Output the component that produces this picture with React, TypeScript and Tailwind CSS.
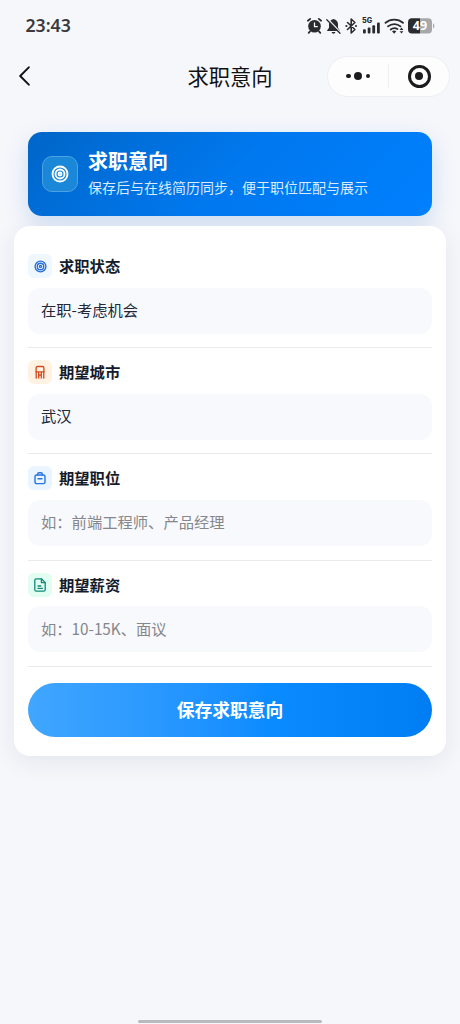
import React, { useState } from 'react';

type IconProps = { className?: string };

const TargetIcon = ({ className }: IconProps) => (
  <svg className={className} viewBox="0 0 24 24" fill="none" stroke="currentColor" strokeWidth={2.5}>
    <circle cx="12" cy="12" r="10" />
    <circle cx="12" cy="12" r="6" />
    <circle cx="12" cy="12" r="2" />
  </svg>
);

const CityIcon = ({ className }: IconProps) => (
  <svg className={className} viewBox="0 0 12 14" fill="none" stroke="currentColor" strokeWidth={1.3} strokeLinejoin="round">
    <path d="M2.1 7.500V3C2.100 2 2.700 1.500 3.600 1.500h4.800c.9 0 1.500.5 1.500 1.500v4.500" />
    <path d="M1.600 6.900h8.800M2.200 13.400V7M9.800 13.400V7M4.700 13.400V7M7.300 13.400V7M4.700 10h2.600M1.600 12.900h1.500M8.900 12.900h1.500" />
  </svg>
);

const BagIcon = ({ className }: IconProps) => (
  <svg className={className} viewBox="0 0 12 14" fill="none" stroke="currentColor" strokeWidth={1.4} strokeLinejoin="round" strokeLinecap="round">
    <rect x="1" y="4" width="10" height="8.6" rx="1.6" />
    <path d="M3.600 4v-.8c0-.9.6-1.500 1.400-1.500h2c.8 0 1.400.6 1.400 1.500V4M4 7.700h4" />
  </svg>
);

const DocIcon = ({ className }: IconProps) => (
  <svg className={className} viewBox="0 0 12 14" fill="none" stroke="currentColor" strokeWidth={1.3} strokeLinejoin="round" strokeLinecap="round">
    <path d="M7.400.8H2.300C1.500.8.8 1.500.8 2.300v9.400c0 .8.7 1.500 1.500 1.500h7.400c.8 0 1.500-.7 1.500-1.500V4.600z" />
    <path d="M7.400.8v3.800h3.800M4 8h2.800M4 10.400h4.400" />
  </svg>
);

const StatusIcons = () => (
  <svg className="h-5 w-[130px]" viewBox="0 0 130 20" fill="none">
    {/* alarm */}
    <g stroke="#2b2b2d" strokeWidth="1.8" strokeLinecap="round">
      <circle cx="8.500" cy="10.200" r="6.300" fill="#2b2b2d" stroke="none" />
      <path d="M1.900 4.800l2.300-1.900M15.100 4.800l-2.300-1.900M4 15.400l-1.300 1.400M13 15.400l1.300 1.400" />
      <path d="M8.500 7v3.600h2.800" stroke="#f6f7fb" strokeWidth="1.300" />
    </g>
    {/* muted bell */}
    <path d="M27.500 3c-3 .6-4.500 2.700-4.500 5.300v3.400l-1.900 2.700v.7h12.800v-.7L32 11.700V8.300C32 5.700 30.500 3.600 27.500 3z" fill="#2b2b2d" />
    <path d="M25.600 16h3.800c-.3 1.200-1 1.700-1.900 1.700s-1.600-.5-1.900-1.700z" fill="#2b2b2d" />
    <path d="M21.800 3l13.200 14" stroke="#f6f7fb" strokeWidth="1.500" />
    <path d="M20.800 3.700L34 17.300" stroke="#2b2b2d" strokeWidth="1.300" strokeLinecap="round" />
    {/* bluetooth */}
    <path d="M41.500 6.500l7.400 7-3.700 3.500V3l3.700 3.500-7.400 7" stroke="#2b2b2d" strokeWidth="1.600" strokeLinejoin="round" strokeLinecap="round" />
    <circle cx="40.400" cy="10" r="1.100" fill="#2b2b2d" />
    <circle cx="50" cy="10" r="1.100" fill="#2b2b2d" />
    {/* mobile signal */}
    <text x="56" y="7.200" fontSize="7.200" fontWeight="800" fill="#2b2b2d" className="font-['Inter',sans-serif]">5G</text>
    <g fill="#2b2b2d">
      <rect x="57" y="13.200" width="2.800" height="4.300" rx="1" />
      <rect x="61.700" y="11.500" width="2.800" height="6" rx="1" />
      <rect x="66.300" y="9.300" width="2.800" height="8.200" rx="1" />
      <rect x="71" y="6.500" width="2.800" height="11" rx="1" />
    </g>
    {/* wifi */}
    <g stroke="#2b2b2d" strokeWidth="1.800" strokeLinecap="round">
      <path d="M79.500 6.800c5-4.300 12.500-4.300 17.500 0M82 10.400c3.600-3.100 9-3.100 12.500 0M84.700 13.500c2.200-1.700 4.800-1.700 6.700-.4" />
    </g>
    <path d="M86 15.300c1.400-1 3-1 4.300 0L88.200 17.700z" fill="#2b2b2d" />
    <path d="M95.500 11.600l1.900 2.300h-3.800zM95.500 17.600l1.900-2.300h-3.800z" fill="#2b2b2d" />
    {/* battery */}
    <path d="M114 2.300h8a4 4 0 014 4v7.200a4 4 0 01-4 4h-8z" fill="#a7a8aa" />
    <path d="M114 2.300h-8a4 4 0 00-4 4v7.200a4 4 0 004 4h8z" fill="#2b2b2d" />
    <path d="M127 7.300c1.800.8 1.800 4.400 0 5.200z" fill="#a7a8aa" />
    <text x="114" y="14.400" textAnchor="middle" fontSize="12.500" fontWeight="700" fill="#fff" className="font-['Noto_Sans',sans-serif]">49</text>
  </svg>
);

interface Field {
  key: string;
  label: string;
  placeholder: string;
  box: string;
  icon: React.ReactNode;
}

const fields: Field[] = [
  { key: 'status', label: '求职状态', placeholder: '', box: 'bg-[#eff7ff] text-[#2b6fd9]', icon: <TargetIcon className="size-[13px]" /> },
  { key: 'city', label: '期望城市', placeholder: '', box: 'bg-[#fff2e3] text-[#cf4a1c]', icon: <CityIcon className="h-3.5 w-3" /> },
  { key: 'job', label: '期望职位', placeholder: '如：前端工程师、产品经理', box: 'bg-[#eaf5ff] text-[#2b73df]', icon: <BagIcon className="h-3.5 w-3" /> },
  { key: 'salary', label: '期望薪资', placeholder: '如：10-15K、面议', box: 'bg-[#e2fdf1] text-[#128a78]', icon: <DocIcon className="h-3.5 w-3" /> },
];

const App: React.FC = () => {
  const [values, setValues] = useState<Record<string, string>>({
    status: '在职-考虑机会',
    city: '武汉',
    job: '',
    salary: '',
  });

  return (
    <div className="flex h-[1024px] w-[460px] flex-col overflow-hidden bg-[#f6f7fb] font-['Noto_Sans_CJK_SC',sans-serif]">
      <div className="flex h-[50px] shrink-0 items-center justify-between pt-0.5 pr-6 pl-[25.500px]">
        <span className="pb-px font-['Noto_Sans',sans-serif] text-[17.700px] font-semibold text-[#3a3a3d]">23:43</span>
        <StatusIcons />
      </div>

      <header className="grid h-[52px] shrink-0 grid-cols-[1fr_auto_1fr] items-center px-2.5">
        <button aria-label="返回" className="pl-2">
          <svg className="h-5 w-3" viewBox="0 0 12 20" fill="none" stroke="#111" strokeWidth="1.900" strokeLinecap="round" strokeLinejoin="round">
            <path d="M10.800 1.300L2.200 10l8.600 8.700" />
          </svg>
        </button>
        <h1 className="text-[21.300px] leading-none text-[#111]">求职意向</h1>
        <div className="flex h-[41px] w-[123px] items-center justify-self-end rounded-full border border-[#eeeff2] bg-[#fdfdfe]">
          <div className="flex flex-1 items-center justify-center gap-[3.500px]">
            <i className="size-[4.500px] rounded-full bg-[#1c1c1e]" />
            <i className="size-2 rounded-full bg-[#1c1c1e]" />
            <i className="size-[4.500px] rounded-full bg-[#1c1c1e]" />
          </div>
          <div className="h-6 w-px bg-[#efeff2]" />
          <div className="flex flex-1 items-center justify-center">
            <div className="flex size-[23px] items-center justify-center rounded-full border-[3px] border-[#1c1c1e]">
              <i className="size-2 rounded-full bg-[#1c1c1e]" />
            </div>
          </div>
        </div>
      </header>

      <main className="flex flex-col gap-2.5 px-3.5 pt-[30px]">
        <section className="mx-3.5 flex h-[84px] items-center gap-2.5 rounded-[14px] bg-linear-135 from-[#0066c8] via-[#0078ee] via-50% to-[#0080ff] px-3.5 shadow-[0_8px_24px_rgba(0,102,204,0.18)]">
          <div className="flex size-9 shrink-0 items-center justify-center rounded-[10px] border border-[#4ba3e3] bg-[#1a87d9]">
            <TargetIcon className="size-[18px] text-white" />
          </div>
          <div className="pb-1">
            <h2 className="text-xl leading-7 font-bold text-white">求职意向</h2>
            <p className="mt-0.5 text-sm leading-5 text-[#d9ebfd]">保存后与在线简历同步，便于职位匹配与展示</p>
          </div>
        </section>

        <section className="rounded-2xl bg-white px-3.5 pt-4 pb-[19px] shadow-[0_6px_24px_rgba(30,41,59,0.08)]">
          {fields.map((field) => (
            <div key={field.key} className="h-[106.200px] border-b border-[#e9eaed] pt-3">
              <label htmlFor={field.key} className="flex h-6 items-center gap-[7px]">
                <span className={`flex size-6 items-center justify-center rounded-md ${field.box}`}>{field.icon}</span>
                <span className="pb-0.5 text-[15.300px] leading-6 font-bold text-[#151b2b]">{field.label}</span>
              </label>
              <input
                id={field.key}
                value={values[field.key]}
                placeholder={field.placeholder}
                onChange={(e) => setValues({ ...values, [field.key]: e.target.value })}
                className="mt-[9.500px] block h-[46px] w-full rounded-xl bg-[#f8f9fd] px-[13px] pb-[3px] text-[15.300px] text-[#20283a] outline-none placeholder:text-[#85878b]"
              />
            </div>
          ))}
          <button className="mt-4 flex h-[54px] w-full items-center justify-center rounded-full bg-linear-to-r from-[#40a6ff] via-[#0a8bff] via-60% to-[#007df2] text-[17.800px] font-bold text-white">
            保存求职意向
          </button>
        </section>
      </main>

      <div className="mx-auto mt-auto mb-px h-[3px] w-[184px] shrink-0 rounded-full bg-[#b9babd]" />
    </div>
  );
};

export default App;
